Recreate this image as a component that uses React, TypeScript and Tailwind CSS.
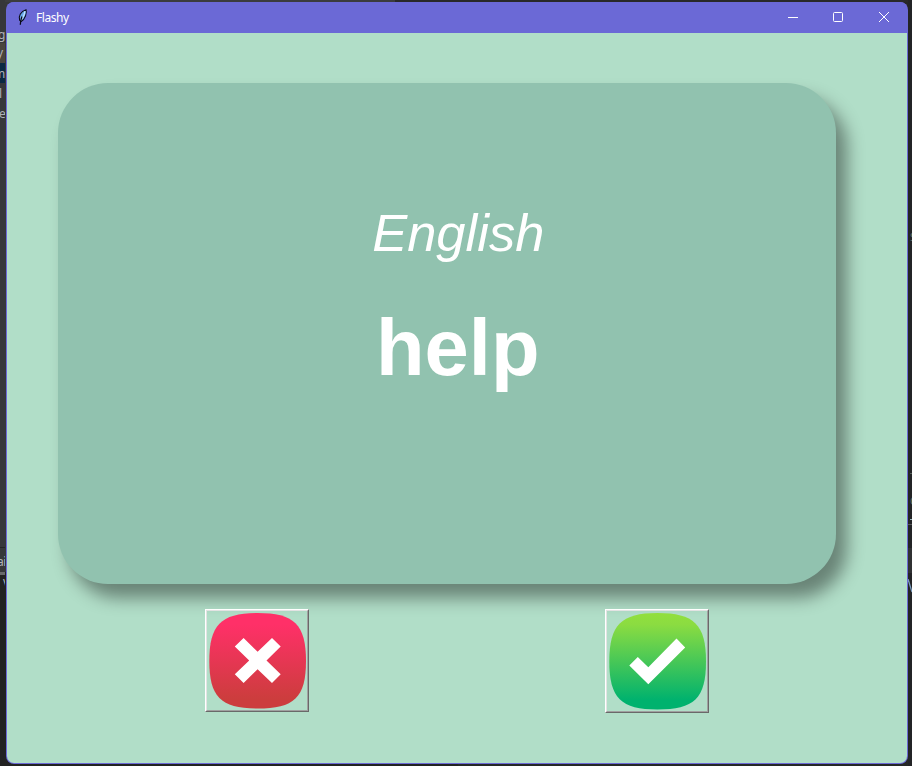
import React from "react";

function Feather() {
  return (
    <svg width="12" height="17" viewBox="0 0 12 17" className="shrink-0">
      <path d="M2.7 11.5C1 7 4 2.3 9 .8 10 3.7 8.4 10.2 4.2 12.4Z" fill="#68a9ed" stroke="#0c0d1c" strokeWidth="1.1" />
      <path d="M8 2C7.6 5.5 6 8.8 3.8 11" stroke="#c3e5ff" strokeWidth="1.2" fill="none" />
      <path d="M5 7.5C4.2 9.5 3.4 12 3.3 15.8" stroke="#090a16" strokeWidth="1.3" fill="none" />
    </svg>
  );
}

function TitleBar() {
  return (
    <header className="flex h-[31px] shrink-0 items-center bg-[#6b69d6] pl-[10px] text-white">
      <Feather />
      <span className="ml-[7px] flex-1 text-[12px] leading-4 tracking-[-0.45px] font-['Noto_Sans',sans-serif]">Flashy</span>
      <button aria-label="Minimize" className="grid h-full w-[45px] place-items-center">
        <svg width="12" height="12" viewBox="0 0 12 12" fill="none" stroke="white"><path d="M1 5.5h10" /></svg>
      </button>
      <button aria-label="Maximize" className="grid h-full w-[46px] place-items-center pb-px">
        <svg width="12" height="12" viewBox="0 0 12 12" fill="none" stroke="white"><rect x="1.5" y="1.5" width="9" height="9" rx="1" /></svg>
      </button>
      <button aria-label="Close" className="grid h-full w-[46px] place-items-center pb-px">
        <svg width="12" height="12" viewBox="0 0 12 12" fill="none" stroke="white"><path d="M1 1l10 10M11 1L1 11" /></svg>
      </button>
    </header>
  );
}

function Squircle({ wrong = false }: { wrong?: boolean }) {
  const id = wrong ? "red" : "green";
  return (
    <svg width="100" height={wrong ? 99 : 100} viewBox="0 0 100 100" preserveAspectRatio="none" className="block">
      <defs>
        <linearGradient id={id} x1="0" y1="0" x2="0" y2="1">
          <stop offset="0" stopColor={wrong ? "#ff3068" : "#92df3d"} />
          <stop offset=".12" stopColor={wrong ? "#ff3068" : "#8bdc41"} />
          <stop offset=".9" stopColor={wrong ? "#cc3d3d" : "#00b26e"} />
          <stop offset="1" stopColor={wrong ? "#cc3d3d" : "#00b26e"} />
        </linearGradient>
      </defs>
      <path fill={`url(#${id})`} d="M50.5 2C87 2 99 13.5 99 50.5S87 98.5 50.5 98.5 2.3 87 2.3 50.5 14 2 50.5 2Z" />
      {wrong ? (
        <path fill="white" d="M36.6 27.3 50.6 41.2 65 27.3 73.7 35.8 59.5 50 73.7 64 65 72.8 50.6 58.8 36.6 72.8 27.8 64 42.2 50 27.8 35.8Z" />
      ) : (
        <path fill="white" d="M22.3 54.5 30.8 46.1 41.3 56.2 69.5 27.6 78.2 36.5 41.3 73.3Z" />
      )}
    </svg>
  );
}

function AnswerButton({ wrong = false }: { wrong?: boolean }) {
  return (
    <button aria-label={wrong ? "Unknown" : "Known"} className="border border-t-white border-r-[#696969] border-b-[#696969] border-l-white">
      <span className="block border border-t-[#e3e3e3] border-r-[#a0a0a0] border-b-[#a0a0a0] border-l-[#e3e3e3]">
        <Squircle wrong={wrong} />
      </span>
    </button>
  );
}

function EditorEdge() {
  return (
    <aside className="flex h-full w-[6px] shrink-0 flex-col overflow-hidden bg-[#36373a] font-['Noto_Sans',sans-serif] text-[12px] leading-5 text-[#aeb1b7]">
      <div className="h-[25px]" />
      <div className="-ml-[2px] h-[18px]">g</div>
      <div className="-ml-[3px] h-5 w-4 bg-[#4a443d]">y</div>
      <div className="-ml-[6px] h-5 w-4 bg-[#0b2943] leading-[22px]">m</div>
      <div className="-ml-[1px] h-5 leading-[22px]">l</div>
      <div className="-ml-[1px] h-5 leading-[22px]">e</div>
      <div className="h-[424px]" />
      <div className="h-px shrink-0 bg-[#232425]" />
      <div className="-ml-[3px] h-6 leading-7 tracking-[-0.4px]">ai</div>
      <div className="h-[3px] shrink-0 bg-[#68696b]" />
      <div className="flex-1 bg-[#222222] pl-[3px] leading-[18px]">V</div>
    </aside>
  );
}

export default function App() {
  return (
    <main className="flex h-[766px] w-[912px] overflow-hidden bg-[#262727]">
      <EditorEdge />
      <div className="-ml-px flex w-[907px] shrink-0 flex-col bg-[linear-gradient(#36373a_0_572px,#222_572px)]">
        <div className="flex h-[2px] shrink-0"><i className="w-[390px] bg-[#3b3c3e]" /><i className="flex-1 bg-[#292929]" /></div>
        <div className="flex h-[764px] bg-[linear-gradient(90deg,transparent_50%,#262727_50%)] pl-px">
          <section className="flex h-[762px] w-[902px] shrink-0 flex-col overflow-hidden rounded-[8px] bg-[#6b69d6] px-px pb-px">
            <TitleBar />
            <div className="flex flex-1 flex-col rounded-b-[7px] bg-[#b1dec8] pt-[50px]">
              <article className="ml-[51px] flex h-[501px] w-[777.5px] shrink-0 flex-col items-center rounded-[50px] bg-[#91c2af] pt-[120px] font-['Liberation_Sans',Arial,sans-serif] text-white shadow-[11px_14px_17px_rgba(0,0,0,0.41)]">
                <h1 className="ml-[23px] text-[52.5px] leading-[60px] italic">English</h1>
                <p className="ml-[22px] mt-[40px] text-[79.5px] leading-[90px] font-bold">help</p>
              </article>
              <div className="relative mt-[25px] ml-[198px] flex items-start gap-[296px]">
                <AnswerButton wrong />
                <AnswerButton />
              </div>
            </div>
          </section>
        </div>
      </div>
      <aside className="-ml-[4px] flex w-1 shrink-0 flex-col overflow-hidden bg-[#232426] font-['Noto_Sans',sans-serif] text-[11px] leading-3 text-[#60716a]">
        <div className="h-[231px] shrink-0" />
        <div className="ml-[2px] h-3">S</div>
        <div className="h-[230px] shrink-0" />
        <div className="ml-[2px] h-px shrink-0 bg-[#56615b]" />
        <div className="h-[21px] shrink-0" />
        <div className="ml-[2px] h-3">C</div>
        <div className="h-3 shrink-0" />
        <div className="ml-[2px] h-px shrink-0 bg-[#9ab5bd]" />
        <div className="mt-1 h-px shrink-0 bg-[#58595b]" />
        <div className="h-[23px] shrink-0" />
        <div className="h-[25px] shrink-0 bg-[#303133]" />
        <svg width="4" height="20" viewBox="0 0 4 20" className="mt-[6px] shrink-0"><path d="M0 0 4 13" stroke="#789bbd" strokeWidth="1.3" /></svg>
      </aside>
    </main>
  );
}
